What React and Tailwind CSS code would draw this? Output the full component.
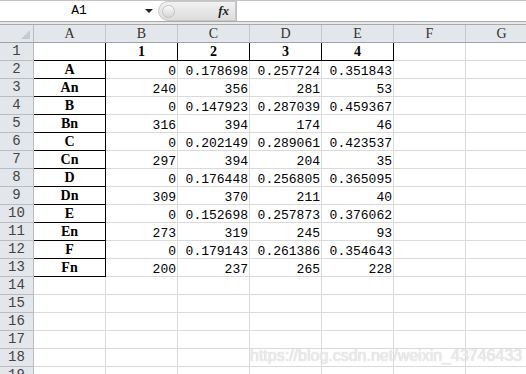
import React from "react";

const COLS = ["A", "B", "C", "D", "E", "F", "G"];

const DATA = [
  ["", "1", "2", "3", "4"],
  ["A", "0", "0.178698", "0.257724", "0.351843"],
  ["An", "240", "356", "281", "53"],
  ["B", "0", "0.147923", "0.287039", "0.459367"],
  ["Bn", "316", "394", "174", "46"],
  ["C", "0", "0.202149", "0.289061", "0.423537"],
  ["Cn", "297", "394", "204", "35"],
  ["D", "0", "0.176448", "0.256805", "0.365095"],
  ["Dn", "309", "370", "211", "40"],
  ["E", "0", "0.152698", "0.257873", "0.376062"],
  ["En", "273", "319", "245", "93"],
  ["F", "0", "0.179143", "0.261386", "0.354643"],
  ["Fn", "200", "237", "265", "228"],
];

const mono = { fontFamily: '"Liberation Mono", monospace' };
const serif = { fontFamily: '"Liberation Serif", serif' };

const FormulaBar = () => (
  <div className="h-[25px] border-t border-[#c4c4c4] bg-[#e9e9e9]">
    <div className="flex h-[21px] bg-white border-b border-[#a9a9a9]">
      <div className="relative w-[158px] flex items-center justify-center text-[13px] text-black" style={mono}>
        A1
        <div className="absolute right-[5px] top-[8px] w-0 h-0 border-l-[4px] border-r-[4px] border-t-[4px] border-l-transparent border-r-transparent border-t-[#222]" />
      </div>
      <div className="relative w-[78px] h-[20px] rounded-l-full bg-gradient-to-b from-[#f2f2f2] to-[#dcdcdc] border border-[#c8c8c8] flex items-center justify-end pr-[6px]">
        <div className="absolute left-[3px] top-[3px] w-[13px] h-[13px] rounded-full bg-gradient-to-b from-[#fbfbfb] to-[#d6d6d6] border border-[#c4c4c4]" />
        <span className="italic font-bold text-[13px] text-[#222]" style={serif}>fx</span>
      </div>
      <div className="flex-1 border-l border-[#bdbdbd]" />
    </div>
    <div className="h-[3px] border-b border-[#a9a9a9]" />
  </div>
);

const Header = () => (
  <div className="flex h-[18px] bg-[#e3e6ea] border-b border-[#9da3ab]">
    <div className="relative w-[34px] shrink-0 border-r border-[#b8bdc4]">
      <div className="absolute right-[3px] bottom-[3px] w-0 h-0" style={{ borderBottom: "9px solid #c7cbd0", borderLeft: "9px solid transparent" }} />
    </div>
    {COLS.map((c) => (
      <div key={c} className="w-[72px] shrink-0 border-r border-[#c3c8ce] flex items-center justify-center text-[14px] text-[#333]" style={serif}>
        {c}
      </div>
    ))}
  </div>
);

const Row = ({ n, cells }) => (
  <div className="flex h-[18px]">
    <div className="w-[34px] shrink-0 h-[18px] bg-[#e3e6ea] border-r border-b border-[#b8bdc4] flex items-center justify-center text-[14px] text-[#444]" style={mono}>
      {n}
    </div>
    {COLS.map((c, i) => {
      const v = cells ? cells[i] : undefined;
      const black = (n === 1 && i <= 4) || (n >= 2 && n <= 13 && i === 0);
      const isLabel = n === 1 || i === 0;
      return (
        <div
          key={c}
          className={`w-[72px] shrink-0 h-[18px] border-r border-b ${black ? "border-black" : "border-[#dadada]"} flex ${isLabel ? "justify-center items-center font-bold text-[14px]" : "justify-end pr-[1px] pt-[4px] text-[13px] leading-[13px]"} text-black`}
          style={isLabel ? serif : mono}
        >
          {v}
        </div>
      );
    })}
  </div>
);

export default function App() {
  const rows = [];
  for (let n = 1; n <= 19; n++) rows.push(<Row key={n} n={n} cells={DATA[n - 1]} />);
  return (
    <div className="relative w-[526px] h-[374px] overflow-hidden bg-white">
      <FormulaBar />
      <Header />
      {rows}
      <div
        className="absolute left-[250px] top-[344px] text-[16px] text-[#ececec] whitespace-nowrap"
        style={{ fontFamily: '"Liberation Sans", sans-serif', textShadow: "0 0 1px #c4c4c4" }}
      >
        https://blog.csdn.net/weixin_43746433
      </div>
    </div>
  );
}
